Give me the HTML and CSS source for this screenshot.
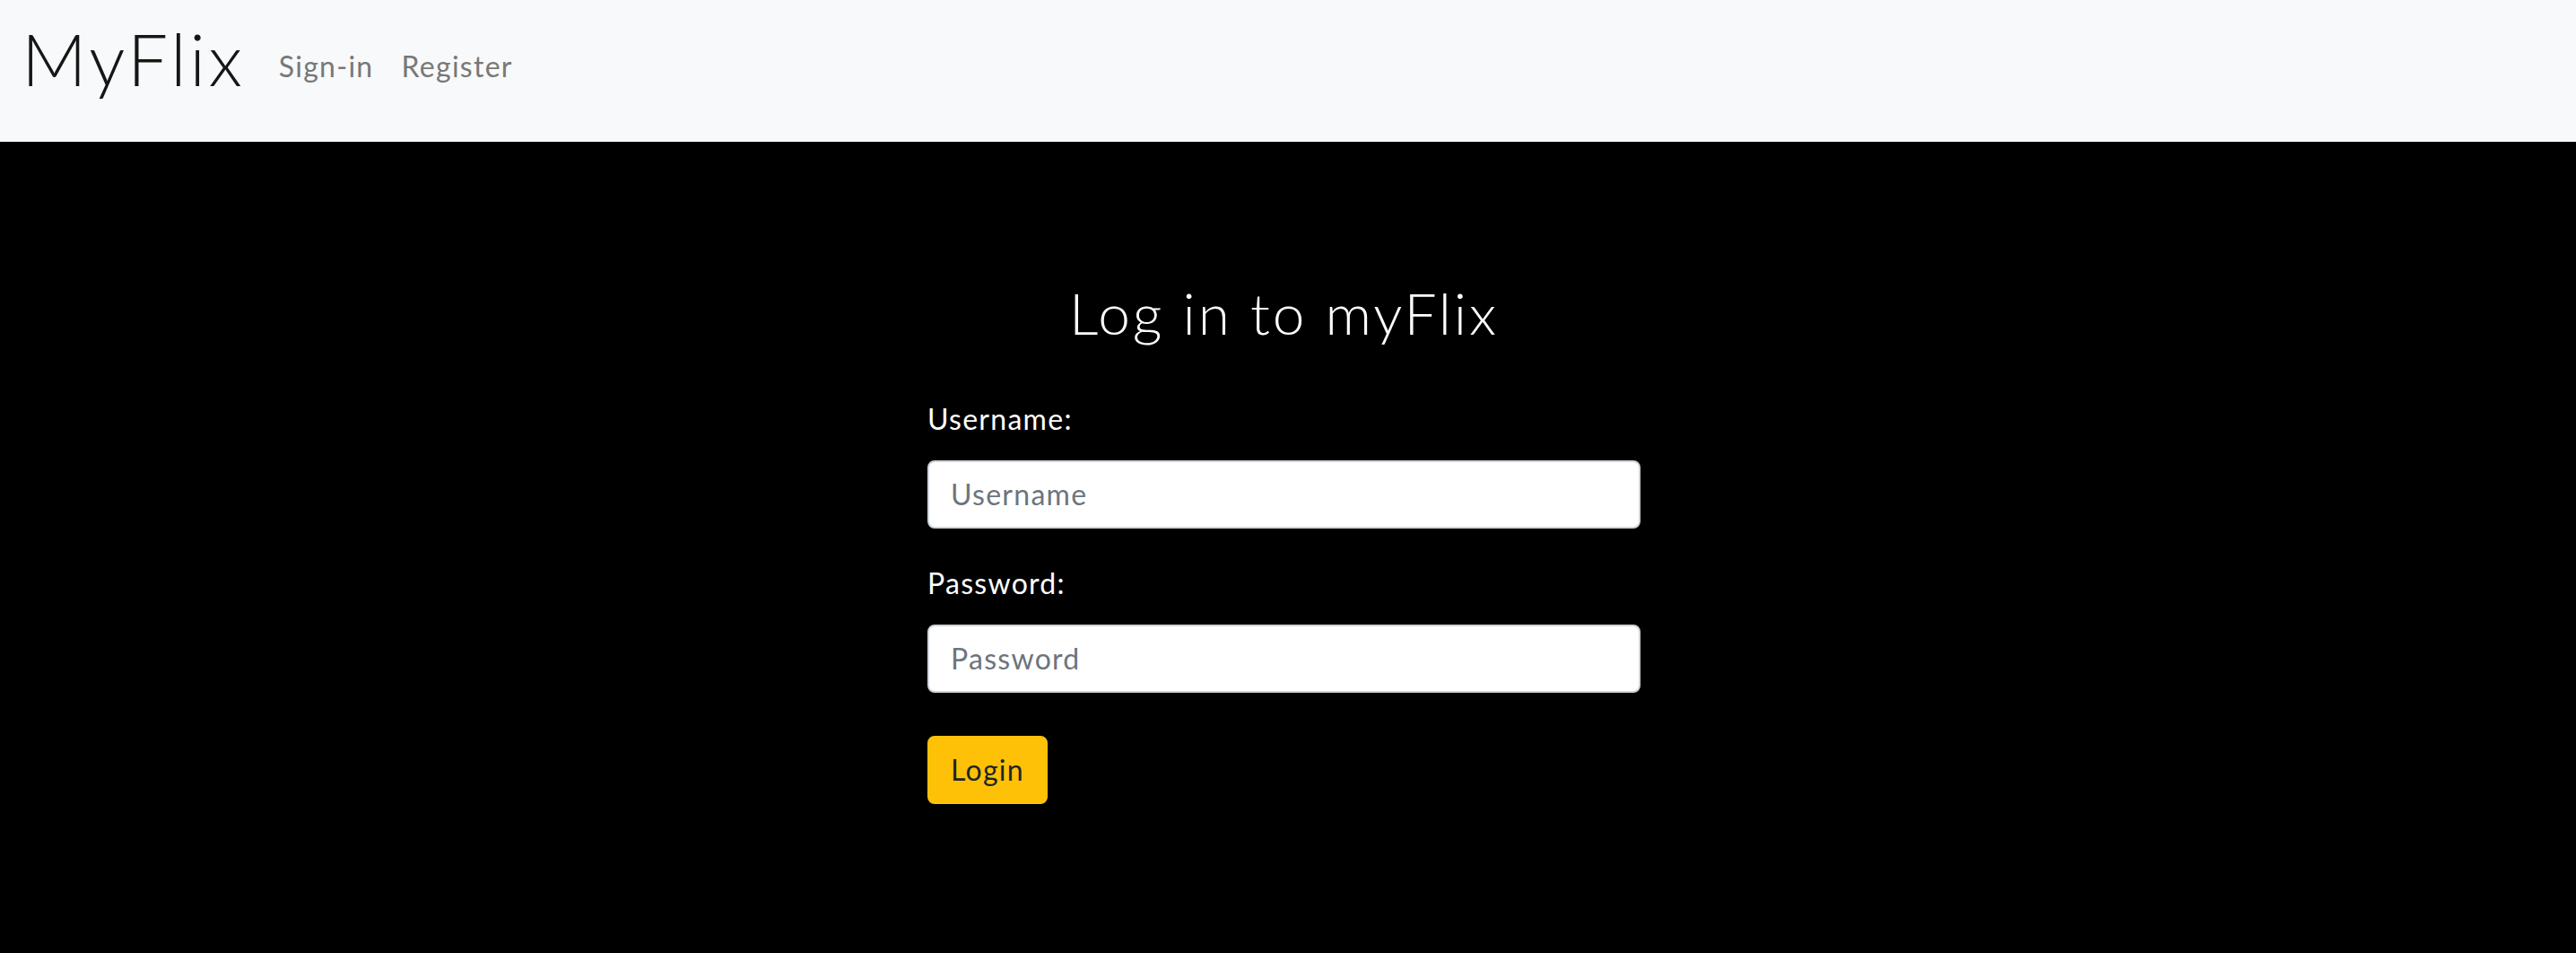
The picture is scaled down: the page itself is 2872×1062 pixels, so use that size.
FILE: index.html
```html
<!DOCTYPE html>
<html lang="en">
<head>
<meta charset="utf-8">
<title>MyFlix</title>
<link rel="stylesheet" href="styles.css">
</head>
<body>
<nav class="navbar">
  <a class="brand" href="#">MyFlix</a>
  <div class="nav-links">
    <a class="nav-link" href="#">Sign-in</a>
    <a class="nav-link" href="#">Register</a>
  </div>
</nav>
<main class="main">
  <form class="login-form">
    <h2 class="title">Log in to myFlix</h2>
    <div class="group">
      <label class="label" for="username">Username:</label>
      <input class="input" id="username" type="text" placeholder="Username">
    </div>
    <div class="group">
      <label class="label" for="password">Password:</label>
      <input class="input" id="password" type="password" placeholder="Password">
    </div>
    <button class="btn" type="button">Login</button>
  </form>
</main>
</body>
</html>
```
FILE: styles.css
```css
* { box-sizing: border-box; }
html, body { margin: 0; padding: 0; }
body {
  background: #000;
  font-family: "Lato", "Liberation Sans", sans-serif;
  font-size: 32px;
  font-weight: 400;
  line-height: 1.5;
  letter-spacing: 0.04em;
  color: #fff;
  min-height: 1062px;
}
.navbar {
  height: 158px;
  background: #f8f9fa;
  display: flex;
  align-items: flex-start;
  padding: 25px 0 0 24px;
}
.brand {
  font-size: 80px;
  line-height: 80px;
  font-weight: 300;
  letter-spacing: 0.045em;
  color: #161616;
  text-decoration: none;
  margin-right: 37px;
}
.nav-links {
  display: flex;
  gap: 31px;
  margin-top: 25px;
}
.nav-link {
  font-size: 32px;
  line-height: 48px;
  color: #777879;
  text-decoration: none;
}
.main {
  display: flex;
  justify-content: center;
  padding: 153px 9px 0 0;
}
.login-form {
  width: 795px;
}
.title {
  margin: 0 0 55px;
  font-size: 64px;
  line-height: 1.2;
  font-weight: 300;
  letter-spacing: 0.045em;
  text-align: center;
}
.group {
  margin-bottom: 37px;
}
.group:last-of-type {
  margin-bottom: 48px;
}
.label {
  display: block;
  margin-bottom: 22px;
}
.input {
  display: block;
  width: 100%;
  height: 76px;
  padding: 12px 24px;
  border: 2px solid #ced4da;
  border-radius: 8px;
  background: #fff;
  font-family: inherit;
  font-weight: 400;
  font-size: 32px;
  letter-spacing: 0.04em;
  color: #212529;
}
.input::placeholder { color: #6c757d; }
.btn {
  display: block;
  height: 76px;
  padding: 0 24px;
  border: 2px solid #ffc107;
  border-radius: 8px;
  background: #ffc107;
  color: #212529;
  font-family: inherit;
  font-weight: 400;
  font-size: 32px;
  letter-spacing: 0.04em;
}
```
